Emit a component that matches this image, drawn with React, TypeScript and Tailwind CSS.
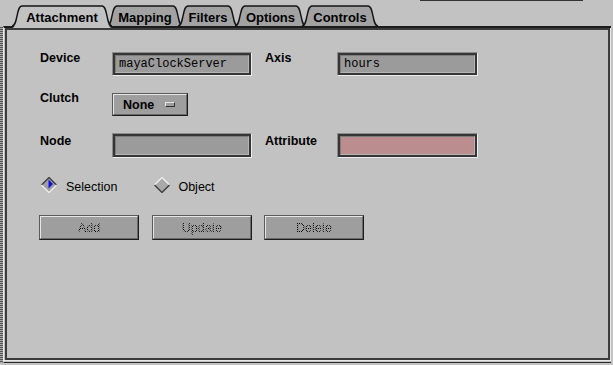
import React from "react";

const FONT = { fontFamily: '"Liberation Sans", Arial, sans-serif' };
const MONO = { fontFamily: '"Liberation Mono", "Courier New", monospace' };

type TabProps = { label: string; w: number; cls: string; selected?: boolean };

function Tab({ label, w, cls, selected }: TabProps) {
  const H = selected ? 23 : 21;
  const s = 10;
  const B = H - (selected ? 2 : 0);
  const fillD = `M0,${H} C${0.6 * s},${H} ${0.4 * s},1 ${s},1 L${w - s},1 C${w - 0.4 * s},1 ${w - 0.6 * s},${H} ${w},${H} Z`;
  const strokeD = `M0,${B} C${0.6 * s},${B} ${0.4 * s},1 ${s},1 L${w - s},1 C${w - 0.4 * s},1 ${w - 0.6 * s},${B} ${w},${B}`;
  return (
    <div className={`relative h-[26px] shrink-0 ${cls} ${selected ? "z-10" : ""}`}>
      <svg className="absolute left-0 top-[5px] overflow-visible" width={w} height={H + 1}>
        <path d={fillD} fill={selected ? "#c2c2c2" : "#a2a2a2"} />
        <path d={strokeD} fill="none" stroke="#141414" strokeWidth={1.4} />
      </svg>
      <span className="relative block text-center pt-[10px] leading-[15px] text-[13px] font-bold text-black">
        {label}
      </span>
    </div>
  );
}

function Field({ cls, fill, children }: { cls: string; fill: string; children?: React.ReactNode }) {
  return (
    <div className={`${cls} shrink-0 border border-t-[#8a8a8a] border-l-[#8a8a8a] border-b-[#ececec] border-r-[#ececec]`}>
      <div className="h-full border-2 border-[#363636]">
        <div
          className={`h-full border border-t-[#7c7c7c] border-l-[#7c7c7c] border-b-[#b6b6b6] border-r-[#b6b6b6] ${fill} flex items-center pl-[3px] text-[12px] text-black`}
          style={MONO}
        >
          {children}
        </div>
      </div>
    </div>
  );
}

function Raised({ cls, children }: { cls: string; children?: React.ReactNode }) {
  return (
    <div className={`${cls} shrink-0 border border-t-[#5a5a5a] border-l-[#5a5a5a] border-b-[#1c1c1c] border-r-[#1c1c1c]`}>
      <div className="h-full border border-t-[#e6e6e6] border-l-[#e6e6e6] border-b-[#6a6a6a] border-r-[#6a6a6a] bg-[#9e9e9e] flex items-center justify-center">
        {children}
      </div>
    </div>
  );
}

function Stipple({ children }: { children: React.ReactNode }) {
  return (
    <span className="text-[12.5px] leading-[14px] text-transparent bg-clip-text bg-[repeating-conic-gradient(#000000_0%_25%,transparent_0%_50%)] bg-size-[2px_2px]">
      {children}
    </span>
  );
}

function Diamond({ selected }: { selected?: boolean }) {
  return (
    <svg width={16} height={16} className="shrink-0">
      <polygon points="8,0.5 15.5,8 8,15.5 0.5,8" fill={selected ? "#a0a0a0" : "#a9a9a9"} />
      <polyline points="0.5,8 8,0.5 15.5,8" fill="none" stroke={selected ? "#3a3a3a" : "#eeeeee"} strokeWidth={1.3} />
      <polyline points="0.5,8 8,15.5 15.5,8" fill="none" stroke={selected ? "#eeeeee" : "#3a3a3a"} strokeWidth={1.3} />
      {selected && <polygon points="7.5,2.5 7.5,11.5 12,7" fill="#1010e0" />}
    </svg>
  );
}

const Label = ({ children, cls }: { children: React.ReactNode; cls: string }) => (
  <div className={`shrink-0 text-[12.5px] font-bold text-black ${cls}`}>{children}</div>
);

export default function App() {
  return (
    <div className="w-[613px] h-[365px] bg-[#c2c2c2] flex flex-col overflow-hidden" style={FONT}>
      {/* tab row */}
      <div className="relative z-10 h-[26px] flex shrink-0">
        <div className="w-[12px] shrink-0" />
        <Tab label="Attachment" w={100} cls="w-[100px]" selected />
        <Tab label="Mapping" w={76} cls="w-[76px] -ml-[5px]" />
        <Tab label="Filters" w={60} cls="w-[60px] -ml-[5px]" />
        <Tab label="Options" w={71} cls="w-[71px] -ml-[3px]" />
        <Tab label="Controls" w={76} cls="w-[76px] -ml-[4px]" />
        <div className="ml-auto mr-[30px] w-[163px] h-px bg-[#333333] self-start" />
      </div>
      {/* body */}
      <div className="flex h-[337px] shrink-0">
        <div className="w-[3px] mt-[1px] shrink-0 bg-[repeating-linear-gradient(to_bottom,#555555_0px,#555555_1px,#a8a8a8_1px,#a8a8a8_2px)]" />
        <div className="w-[608px] h-full shrink-0 border-t-2 border-t-[#1c1c1c] border-l border-l-[#e8e8e8] border-b border-b-[#2a2a2a] pb-[1px]">
          <div className="h-full pl-[1px] border-b border-r border-b-[#e8e8e8] border-r-[#e8e8e8]">
            <div className="h-full border-2 border-[#3c3c3c] pl-[33px] pt-[22px]">
              {/* row 1 */}
              <div className="flex items-start h-[24px]">
                <Label cls="w-[72px] leading-[12px]">Device</Label>
                <Field cls="w-[140px] h-[24px]" fill="bg-[#9b9b9b]">mayaClockServer</Field>
                <Label cls="ml-[13px] w-[72px] leading-[12px]">Axis</Label>
                <Field cls="w-[141px] h-[24px]" fill="bg-[#9b9b9b]">hours</Field>
              </div>
              {/* row 2 */}
              <div className="flex items-start h-[23px] mt-[17px]">
                <Label cls="w-[72px] leading-[11px]">Clutch</Label>
                <Raised cls="w-[76px] h-[23px]">
                  <div className="w-full flex items-center pl-[9px]">
                    <span className="text-[12.5px] font-bold text-black leading-[14px]">None</span>
                    <span className="ml-[11px] w-[10px] h-[5px] border border-t-[#e6e6e6] border-l-[#e6e6e6] border-b-[#333333] border-r-[#333333] bg-[#9e9e9e]" />
                  </div>
                </Raised>
              </div>
              {/* row 3 */}
              <div className="flex items-start h-[25px] mt-[17px]">
                <Label cls="w-[72px] leading-[12px] mt-[2px]">Node</Label>
                <Field cls="w-[140px] h-[25px]" fill="bg-[#9b9b9b]" />
                <Label cls="ml-[13px] w-[72px] leading-[12px] mt-[2px]">Attribute</Label>
                <Field cls="w-[141px] h-[25px]" fill="bg-[#bc8d8f]" />
              </div>
              {/* row 4 radios */}
              <div className="flex items-start h-[16px] mt-[19px] ml-[1px]">
                <Diamond selected />
                <span className="ml-[9px] text-[12.5px] leading-[20px] text-black">Selection</span>
                <div className="ml-[37px]">
                  <Diamond />
                </div>
                <span className="ml-[8px] text-[12.5px] leading-[20px] text-black">Object</span>
              </div>
              {/* row 5 buttons */}
              <div className="flex items-start h-[25px] mt-[22px] -ml-[1px]">
                <Raised cls="w-[100px] h-[25px]">
                  <Stipple>Add</Stipple>
                </Raised>
                <Raised cls="w-[100px] h-[25px] ml-[13px]">
                  <Stipple>Update</Stipple>
                </Raised>
                <Raised cls="w-[100px] h-[25px] ml-[12px]">
                  <Stipple>Delete</Stipple>
                </Raised>
              </div>
            </div>
          </div>
        </div>
      </div>
    </div>
  );
}
